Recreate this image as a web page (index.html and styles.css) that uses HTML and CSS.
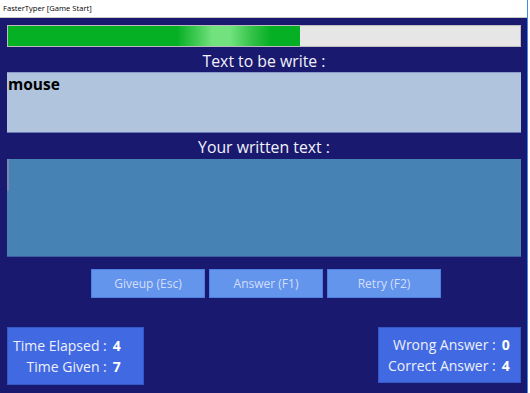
FILE: index.html
```
<!DOCTYPE html>
<html>
<head>
<meta charset="utf-8">
<link rel="stylesheet" href="styles.css">
</head>
<body>
<div class="window">
  <div class="titlebar">FasterTyper [Game Start]</div>
  <div class="client">
    <div class="progress"><div class="progress-fill" style="width:57%"></div></div>
    <div class="label">Text to be write :</div>
    <div class="textbox target">mouse</div>
    <div class="label">Your written text :</div>
    <div class="textbox input"><span class="caret"></span></div>
    <div class="buttons">
      <button class="btn">Giveup (Esc)</button>
      <button class="btn">Answer (F1)</button>
      <button class="btn">Retry (F2)</button>
    </div>
    <div class="stats">
      <div class="panel panel-time">
        <span class="k">Time Elapsed :</span><span class="v">4</span>
        <span class="k">Time Given :</span><span class="v">7</span>
      </div>
      <div class="panel panel-score">
        <span class="k">Wrong Answer :</span><span class="v">0</span>
        <span class="k">Correct Answer :</span><span class="v">4</span>
      </div>
    </div>
  </div>
</div>
</body>
</html>
```
FILE: styles.css
```
html, body {
  margin: 0;
  padding: 0;
  width: 530px;
  height: 393px;
  overflow: hidden;
  background: #ffffff;
  font-family: "Open Sans", "Noto Sans", sans-serif;
}
.window {
  width: 527px;
  height: 393px;
  border-right: 1px solid #3d8ee8;
  display: flex;
  flex-direction: column;
}
.titlebar {
  height: 17px;
  border-bottom: 1px solid #c8c8c8;
  background: #ffffff;
  font-size: 7.6px;
  line-height: 17px;
  padding-left: 3px;
  color: #000;
}
.client {
  flex: 1;
  background: #191970;
  padding: 7px 6px 0 7px;
  display: flex;
  flex-direction: column;
}
.progress {
  height: 20px;
  border: 1px solid #bcbcbc;
  background: #e6e6e6;
  display: flex;
}
.progress-fill {
  height: 100%;
  background: linear-gradient(to right, #06b025 0%, #06b025 58%, #3cc850 64%, #72e27e 70%, #72e27e 76%, #30c045 84%, #06b025 90%, #06b025 100%);
}
.label {
  height: 25px;
  line-height: 28px;
  text-align: center;
  color: #f2f2f8;
  font-size: 15.8px;
}
.textbox {
  box-sizing: border-box;
  position: relative;
}
.target {
  height: 61px;
  background: #b0c4de;
  border-top: 1px solid #8b9ac8;
  border-bottom: 1px solid #6d78b8;
  font-weight: bold;
  font-size: 15.5px;
  color: #000;
  padding: 1px 1px;
  line-height: 20px;
}
.input {
  height: 98px;
  background: #4682b4;
  border-bottom: 1px solid #3a5fa0;
}
.target + .label {
  height: 26px;
}
.caret {
  position: absolute;
  left: 0;
  top: 0;
  width: 2px;
  height: 32px;
  background: #7b86b0;
}
.buttons {
  margin-top: 12px;
  display: flex;
  justify-content: center;
  gap: 4px;
  padding-left: 4px;
}
.btn {
  width: 114px;
  height: 29px;
  box-sizing: border-box;
  background: #6495ed;
  border: 1px solid #4f7fe0;
  color: #d3defa;
  font-family: "Open Sans", "Noto Sans", sans-serif;
  font-size: 12px;
  padding: 0;
}
.stats {
  margin-top: 29px;
  display: flex;
  justify-content: space-between;
  align-items: flex-start;
}
.panel {
  box-sizing: border-box;
  background: #4169e1;
  border: 1px solid #3458c8;
  color: #eef0fb;
  font-size: 14px;
  display: grid;
  grid-template-columns: auto auto;
  align-content: start;
  column-gap: 6px;
  row-gap: 1px;
  line-height: 20px;
}
.panel .k { text-align: right; }
.panel .v { font-weight: bold; color: #fff; }
.panel-time {
  width: 137px;
  height: 58px;
  padding: 8px 0 0 5px;
  justify-content: start;
}
.panel-score {
  width: 143px;
  height: 56px;
  padding: 7px 0 0 9px;
  justify-content: start;
}
```
